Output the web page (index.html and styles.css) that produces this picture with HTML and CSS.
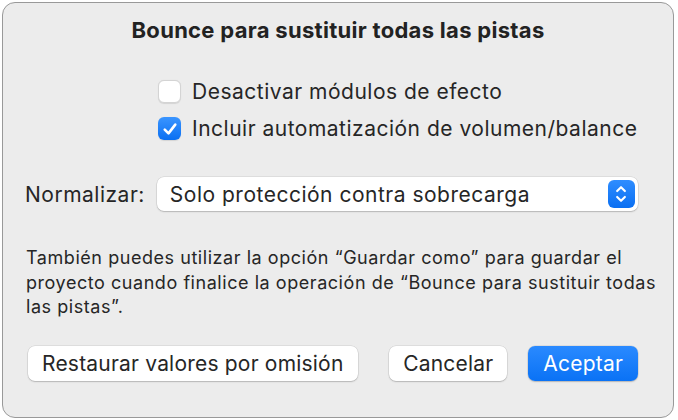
FILE: index.html
```html
<!DOCTYPE html>
<html lang="es">
<head>
<meta charset="utf-8">
<title>Bounce</title>
<link rel="stylesheet" href="styles.css">
</head>
<body>
<div class="dialog">
  <h1 class="title">Bounce para sustituir todas las pistas</h1>
  <div class="checks">
    <label class="check">
      <span class="box"></span>
      <span class="check-label">Desactivar módulos de efecto</span>
    </label>
    <label class="check">
      <span class="box checked">
        <svg viewBox="0 0 24 24" width="18" height="18"><path d="M5 12.8 L10 17.8 L19 6.2" fill="none" stroke="#fff" stroke-width="3.5" stroke-linecap="round" stroke-linejoin="round"/></svg>
      </span>
      <span class="check-label">Incluir automatización de volumen/balance</span>
    </label>
  </div>
  <div class="normalize">
    <span class="norm-label">Normalizar:</span>
    <div class="popup">
      <span class="popup-text">Solo protección contra sobrecarga</span>
      <span class="stepper">
        <svg viewBox="0 0 28 28" width="27" height="28"><path d="M9.5 11 L13.5 7 L17.5 11 M9.5 17 L13.5 21 L17.5 17" fill="none" stroke="#fff" stroke-width="2.2" stroke-linecap="round" stroke-linejoin="round"/></svg>
      </span>
    </div>
  </div>
  <p class="note">También puedes utilizar la opción “Guardar como” para guardar el proyecto cuando finalice la operación de “Bounce para sustituir todas las pistas”.</p>
  <div class="buttons">
    <button class="btn">Restaurar valores por omisión</button>
    <div class="spacer"></div>
    <button class="btn">Cancelar</button>
    <button class="btn primary">Aceptar</button>
  </div>
</div>
</body>
</html>
```

FILE: styles.css
```css
html, body {
  margin: 0;
  padding: 0;
  background: #ffffff;
}
body {
  width: 678px;
  height: 420px;
  font-family: Inter, "Noto Sans", "Liberation Sans", sans-serif;
  color: #262626;
}
.dialog {
  box-sizing: border-box;
  margin: 2px 0 0 2px;
  width: 672px;
  height: 416px;
  background: #ececec;
  border: 1px solid #999999;
  border-radius: 13px;
  padding: 14px 15px 0 22px;
  display: flex;
  flex-direction: column;
}
.title {
  margin: 0 7px 0 0;
  font-size: 22px;
  font-weight: 700;
  letter-spacing: 0.3px;
  text-align: center;
  line-height: 26px;
  color: #222;
}
.checks {
  margin-top: 37px;
  margin-left: 133px;
  display: flex;
  flex-direction: column;
  gap: 14px;
}
.check {
  display: flex;
  align-items: center;
  gap: 11px;
  font-size: 21px;
  letter-spacing: 0.5px;
  line-height: 23px;
}
.box {
  box-sizing: border-box;
  width: 23px;
  height: 23px;
  border-radius: 6px;
  background: #ffffff;
  border: 1px solid #d4d4d4;
  box-shadow: 0 0.5px 1px rgba(0,0,0,0.10);
  display: flex;
  align-items: center;
  justify-content: center;
}
.box.checked {
  border: none;
  background: linear-gradient(#3a95ff, #0a6ff2);
}
.normalize {
  margin-top: 37px;
  display: flex;
  align-items: center;
  gap: 12px;
}
.norm-label {
  font-size: 21px;
  letter-spacing: 0.5px;
}
.popup {
  box-sizing: border-box;
  flex: 1;
  height: 34px;
  margin-right: 20px;
  background: #fff;
  border-radius: 7px;
  box-shadow: 0 0 0 0.5px rgba(0,0,0,0.12), 0 1px 1.5px rgba(0,0,0,0.18);
  display: flex;
  align-items: center;
  justify-content: space-between;
  padding: 0 3px 0 13px;
  font-size: 21px;
  letter-spacing: 0.5px;
}
.stepper {
  width: 27px;
  height: 28px;
  border-radius: 6px;
  background: linear-gradient(#2f8dff, #0a6ff2);
  display: flex;
  align-items: center;
  justify-content: center;
}
.note {
  margin: 35px 0 0 1px;
  font-size: 18px;
  letter-spacing: 0.55px;
  line-height: 24.5px;
  color: #262626;
}
.buttons {
  margin-top: 26px;
  display: flex;
  align-items: center;
  gap: 21px;
  padding-left: 3px;
  padding-right: 20px;
}
.spacer {
  flex: 1;
  margin-right: -12px;
}
.btn {
  flex-shrink: 0;
  white-space: nowrap;
  font-family: inherit;
  font-size: 21px;
  letter-spacing: 0.2px;
  color: #262626;
  height: 35px;
  padding: 0 14px;
  border: none;
  border-radius: 7px;
  background: #fff;
  box-shadow: 0 0 0 0.5px rgba(0,0,0,0.12), 0 1px 1.5px rgba(0,0,0,0.18);
}
.btn.primary {
  color: #fff;
  background: linear-gradient(#2a8aff, #0a72f5);
  padding: 0 15px;
}
```
